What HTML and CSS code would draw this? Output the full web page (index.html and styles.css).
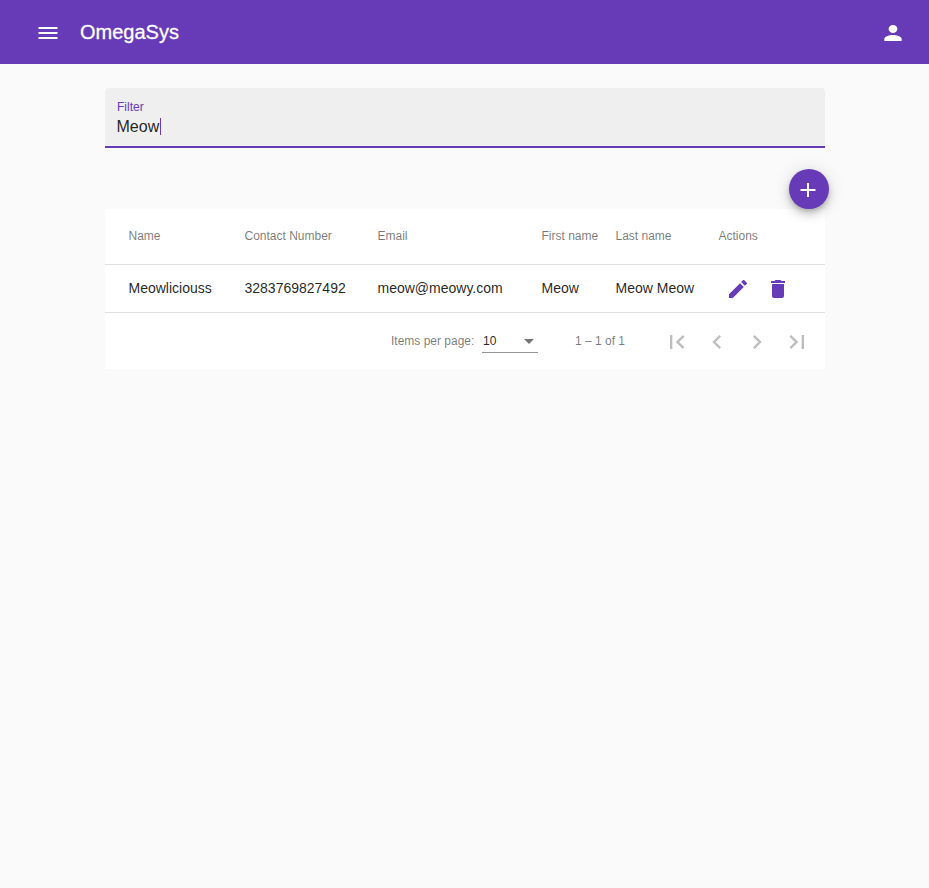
FILE: index.html
```html
<!DOCTYPE html>
<html lang="en">
<head>
<meta charset="utf-8">
<title>OmegaSys</title>
<link rel="stylesheet" href="styles.css">
</head>
<body>
<header class="toolbar">
  <svg class="icon" viewBox="0 0 24 24"><path d="M2.5 18h19v-2h-19v2zm0-5h19v-2h-19v2zm0-7v2h19V6h-19z"/></svg>
  <h1 class="brand">OmegaSys</h1>
  <svg class="icon" viewBox="0 0 24 24"><path d="M12 12c2.21 0 4.4-1.79 4.4-4s-1.79-4-4.4-4-4.4 1.79-4.4 4 2.19 4 4.4 4zm0 2c-2.9 0-8.7 1.34-8.7 4v2h17.4v-2c0-2.66-5.8-4-8.7-4z"/></svg>
</header>
<main class="content">
  <div class="field">
    <div class="field-label">Filter</div>
    <div class="field-value"><span>Meow</span><i class="caret"></i></div>
  </div>
  <div class="add-row">
    <div class="fab"><svg class="icon" viewBox="0 0 24 24"><path d="M19.5 13H13v6h-2v-6H4.500v-2H11V5h2v6h6.500v2z"/></svg></div>
  </div>
  <section class="card">
    <div class="row head">
      <span>Name</span><span>Contact Number</span><span>Email</span><span>First name</span><span>Last name</span><span>Actions</span>
    </div>
    <div class="row data">
      <span>Meowliciouss</span><span>3283769827492</span><span>meow@meowy.com</span><span>Meow</span><span>Meow Meow</span>
      <div class="actions">
        <svg class="icon" viewBox="0 0 24 24"><path d="M3 17.25V21h3.75L17.81 9.94l-3.75-3.75L3 17.25zM20.71 7.04c.39-.39.39-1.02 0-1.41l-2.34-2.34c-.39-.39-1.02-.39-1.41 0l-1.83 1.83 3.75 3.75 1.83-1.83z"/></svg>
        <svg class="icon" viewBox="0 0 24 24"><path d="M6 19c0 1.1.9 2 2 2h8c1.1 0 2-.9 2-2V7H6v12zM19 4h-3.5l-1-1h-5l-1 1H5v2h14V4z"/></svg>
      </div>
    </div>
    <div class="paginator">
      <span class="per-page">Items per page:</span>
      <div class="select"><span>10</span><i class="arrow"></i></div>
      <span class="range">1 – 1 of 1</span>
      <div class="pages">
        <svg viewBox="0 0 24 24"><path d="M18.41 16.59L13.82 12l4.59-4.59L17 6l-6 6 6 6zM6 6h2v12H6z"/></svg>
        <svg viewBox="0 0 24 24"><path d="M15.41 7.41L14 6l-6 6 6 6 1.41-1.41L10.83 12z"/></svg>
        <svg viewBox="0 0 24 24"><path d="M10 6L8.59 7.41 13.17 12l-4.58 4.59L10 18l6-6z"/></svg>
        <svg viewBox="0 0 24 24"><path d="M5.59 7.41L10.18 12l-4.59 4.59L7 18l6-6-6-6zM16 6h2v12h-2z"/></svg>
      </div>
    </div>
  </section>
</main>
</body>
</html>
```
FILE: styles.css
```css
* { box-sizing: border-box; }
body {
  margin: 0;
  min-height: 100vh;
  background: #fafafa;
  color: rgba(0, 0, 0, .87);
  font: 14px/20px "Liberation Sans", Arial, sans-serif;
}
svg { display: block; fill: currentColor; flex: none; }
.icon { width: 24px; height: 24px; }
.toolbar {
  display: flex;
  align-items: center;
  height: 64px;
  padding: 2px 24px 0 36px;
  background: #673ab7;
  color: #fff;
}
.brand {
  flex: 1;
  margin: 0 0 2px 20px;
  font-size: 20px;
  line-height: 24px;
  font-weight: 400;
  -webkit-text-stroke: .3px currentColor;
}
.content { width: 720px; margin: 24px auto 0 105px; }
.field {
  height: 60px;
  padding: 12px 12px 0;
  border-bottom: 2px solid #673ab7;
  border-radius: 4px 4px 0 0;
  background: #efefef;
}
.field-label { font-size: 12px; line-height: 14px; color: #673ab7; }
.field-value { display: flex; align-items: center; margin: 4px 0 0 -.5px; font-size: 16px; line-height: 18px; }
.caret { width: 1px; height: 17px; margin: -1px 0 0 .5px; background: #673ab7; }
.add-row { display: flex; justify-content: flex-end; height: 61px; padding-top: 21px; margin-right: -4px; }
.fab {
  position: relative;
  width: 40px;
  height: 40px;
  padding: 9px 0 0 7.4px;
  border-radius: 50%;
  background: #673ab7;
  color: #fff;
  box-shadow: 0 3px 5px -1px rgba(0, 0, 0, .2), 0 6px 10px rgba(0, 0, 0, .14), 0 1px 18px rgba(0, 0, 0, .12);
}
.card { background: #fff; }
.row {
  display: grid;
  grid-template-columns: 116px 133px 164px 74px 103px 1fr;
  align-items: center;
  height: 48px;
  padding: 0 0 0 23.5px;
  border-bottom: 1px solid #e0e0e0;
}
.head { height: 56px; padding-bottom: 1px; font-size: 12px; color: rgba(0, 0, 0, .54); }
.data { padding-bottom: 1px; }
.actions { display: flex; gap: 16px; padding: 2px 0 0 7.4px; color: #673ab7; }
.paginator {
  display: flex;
  align-items: center;
  height: 56px;
  padding-right: 14px;
  font-size: 12px;
  color: rgba(0, 0, 0, .54);
}
.per-page { width: 91px; margin-left: 286px; }
.select {
  display: flex;
  align-items: center;
  justify-content: space-between;
  width: 56px;
  height: 24px;
  padding: 0 4px 0 1px;
  border-bottom: 1px solid #949494;
  color: rgba(0, 0, 0, .87);
}
.arrow { border: 5px solid transparent; border-top-color: #757575; border-bottom: 0; margin-top: 2px; }
.range { margin-left: 37px; }
.pages { display: flex; gap: 12px; margin-left: auto; padding-top: 2px; color: #bdbdbd; }
.pages svg { width: 28px; height: 28px; }
```
